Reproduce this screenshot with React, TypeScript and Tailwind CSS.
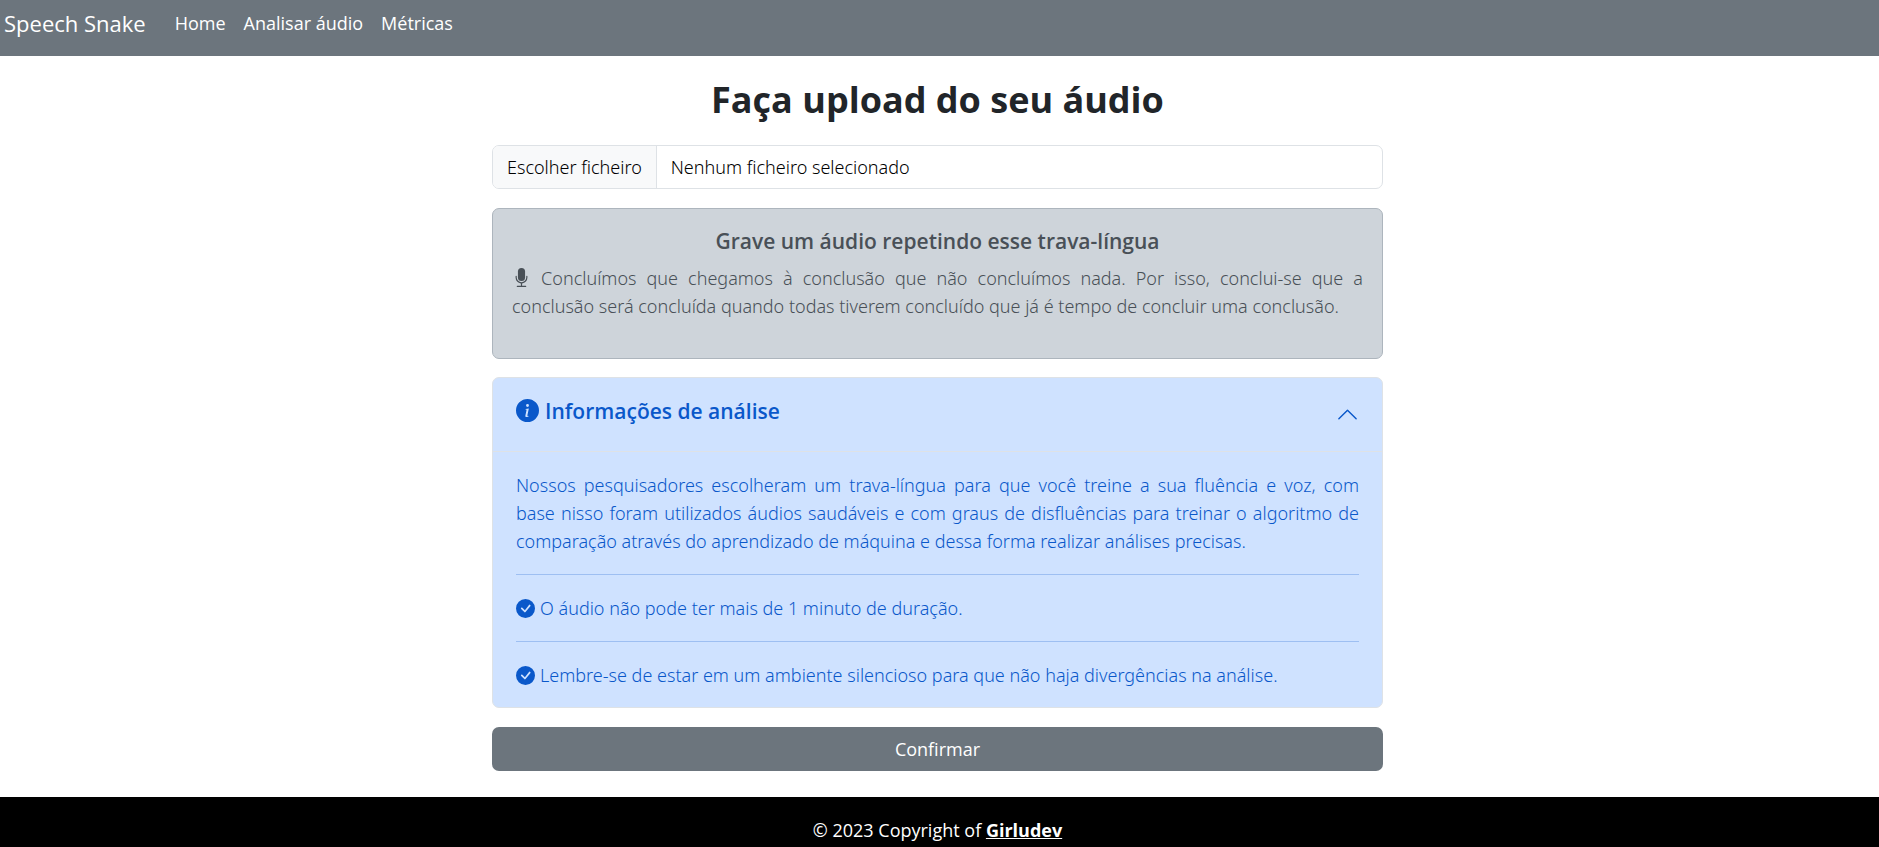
import { useState } from "react";
import {
  BsCheckCircleFill,
  BsChevronUp,
  BsInfoCircleFill,
  BsMicFill,
} from "react-icons/bs";

const links = ["Home", "Analisar áudio", "Métricas"];

const rules = [
  "O áudio não pode ter mais de 1 minuto de duração.",
  "Lembre-se de estar em um ambiente silencioso para que não haja divergências na análise.",
];

function Navbar() {
  return (
    <nav className="flex h-14 items-start bg-[#6c757d] px-1 pt-[9px] text-white">
      <a href="#" className="mr-5 text-[22px] leading-[28px]">
        Speech Snake
      </a>
      <ul className="flex">
        {links.map((label) => (
          <li key={label}>
            <a href="#" className="block px-[9px]">
              {label}
            </a>
          </li>
        ))}
      </ul>
    </nav>
  );
}

function FilePicker() {
  const [name, setName] = useState("");
  return (
    <label className="mb-[19px] flex h-[44px] cursor-pointer items-stretch overflow-hidden rounded-[7px] border border-[#dee2e6] font-['Noto_Sans',sans-serif] leading-[42px] font-light text-black">
      <input
        type="file"
        accept="audio/*"
        className="sr-only"
        onChange={(e) => setName(e.target.files?.[0]?.name ?? "")}
      />
      <span className="border-r border-[#dee2e6] bg-[#f8f9fa] px-[14px]">
        Escolher ficheiro
      </span>
      <span className="px-[14px]">{name || "Nenhum ficheiro selecionado"}</span>
    </label>
  );
}

function Prompt() {
  return (
    <section className="mb-[18px] rounded-[7px] border border-[#adb5bd] bg-[#ced4da] px-[19px] pt-[18px] pb-[38px] text-[#495057]">
      <h2 className="mb-[9px] text-center text-[21px] leading-[28px] font-semibold">
        Grave um áudio repetindo esse trava-língua
      </h2>
      <p className="text-justify font-['Noto_Sans',sans-serif] font-light">
        <BsMicFill className="inline size-[19px] align-[-2px]" aria-hidden />{" "}
        Concluímos que chegamos à conclusão que não concluímos nada. Por isso,
        conclui-se que a conclusão será concluída quando todas tiverem concluído
        que já é tempo de concluir uma conclusão.
      </p>
    </section>
  );
}

function Info() {
  const [open, setOpen] = useState(true);
  return (
    <section className="mb-[19px] overflow-hidden rounded-[7px] border border-[#dee2e6] bg-[#cfe2ff] text-[#0a58ca]">
      <h2>
        <button
          type="button"
          aria-expanded={open}
          aria-controls="info-body"
          onClick={() => setOpen(!open)}
          className="flex h-[73px] w-full items-center justify-between px-[23px] text-left"
        >
          <span className="flex items-center gap-[6px] pb-2 text-[21px] leading-[28px] font-semibold">
            <BsInfoCircleFill className="size-[23px]" aria-hidden />
            Informações de análise
          </span>
          <BsChevronUp
            className={open ? "size-[23px]" : "size-[23px] rotate-180"}
            aria-hidden
          />
        </button>
      </h2>
      {open && (
        <div
          id="info-body"
          className="border-t border-[#dee2e6] px-[23px] pt-[19px] pb-[18px] font-['Noto_Sans',sans-serif] font-light"
        >
          <p className="text-justify">
            Nossos pesquisadores escolheram um trava-língua para que você treine
            a sua fluência e voz, com base&nbsp;nisso foram utilizados áudios
            saudáveis e com graus de disfluências para treinar o algoritmo de
            comparação através do aprendizado de máquina e dessa forma realizar
            análises precisas.
          </p>
          {rules.map((rule) => (
            <p
              key={rule}
              className="mt-[19px] flex items-center gap-[5px] border-t border-[#9ebff2] pt-[19px]"
            >
              <BsCheckCircleFill className="size-[19px] shrink-0" aria-hidden />
              {rule}
            </p>
          ))}
        </div>
      )}
    </section>
  );
}

export default function App() {
  return (
    <div className="flex min-h-screen flex-col bg-white font-['Open_Sans',sans-serif] text-[18px] leading-[28px] text-[#212529]">
      <Navbar />
      <main className="pr-1">
        <form
          className="mx-auto max-w-[891px] pt-[19px] pb-[26px]"
          onSubmit={(e) => e.preventDefault()}
        >
          <h1 className="mb-5 text-center text-[36px] leading-[50px] font-bold">
            Faça upload do seu áudio
          </h1>
          <FilePicker />
          <Prompt />
          <Info />
          <button
            type="submit"
            className="block h-[44px] w-full rounded-[7px] bg-[#6c757d] text-white"
          >
            Confirmar
          </button>
        </form>
      </main>
      <footer className="grow bg-black pt-[19px] pr-1 text-center text-white">
        © 2023 Copyright of{" "}
        <a href="#" className="font-bold underline">
          Girludev
        </a>
      </footer>
    </div>
  );
}
